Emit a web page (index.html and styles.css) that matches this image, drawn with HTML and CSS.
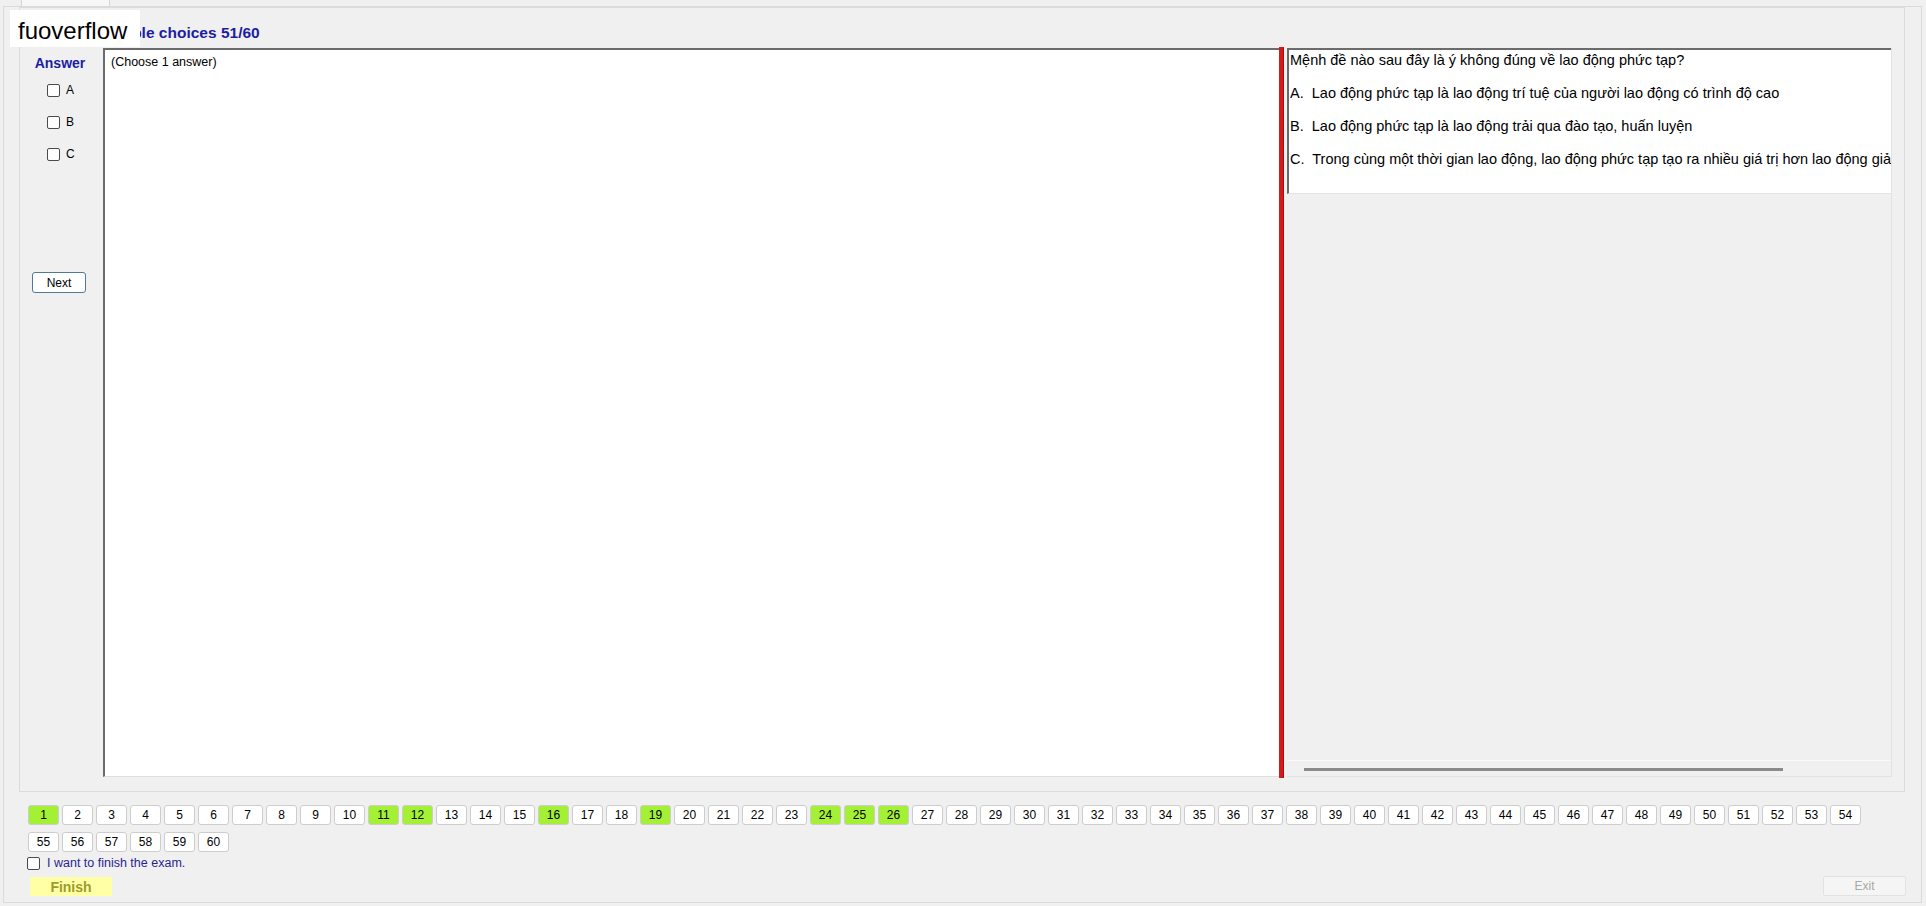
FILE: index.html
```html
<!DOCTYPE html>
<html lang="vi">
<head>
  <meta charset="UTF-8" />
  <title>EOS - Multiple choices</title>
  <link rel="stylesheet" href="styles.css">
</head>
<body>
  <div class="tabs">
    <div class="tab"></div>
  </div>

  <div class="page">
    <div class="exam">
      <div class="exam-title">Multiple choices 51/60</div>

      <div class="exam-body">
        <div class="answer-col">
          <div class="answer-label">Answer</div>
          <div class="answer-row"><span class="box"></span>A</div>
          <div class="answer-row"><span class="box"></span>B</div>
          <div class="answer-row"><span class="box"></span>C</div>
          <button class="btn-next">Next</button>
        </div>

        <div class="choose-box">(Choose 1 answer)</div>

        <div class="splitter"></div>

        <div class="question-col">
          <div class="question-box">
            <p>Mệnh đề nào sau đây là ý không đúng về lao động phức tạp?</p>
            <p>A.  Lao động phức tạp là lao động trí tuệ của người lao động có trình độ cao</p>
            <p>B.  Lao động phức tạp là lao động trải qua đào tạo, huấn luyện</p>
            <p>C.  Trong cùng một thời gian lao động, lao động phức tạp tạo ra nhiều giá trị hơn lao động giản đơn</p>
          </div>
          <div class="question-rest"></div>
          <div class="hscroll"><span class="hscroll-thumb"></span></div>
        </div>
      </div>
    </div>

    <div class="footer">
      <div class="nav-grid" id="navGrid"></div>
      <label class="finish-check"><span class="box"></span>I want to finish the exam.</label>
      <div class="footer-actions">
        <button class="btn-finish">Finish</button>
        <button class="btn-exit" disabled>Exit</button>
      </div>
    </div>
  </div>

  <div class="brand">fuoverflow</div>

<script>
  // questions already answered get the green button
  const answered = [1, 11, 12, 16, 19, 24, 25, 26];
  const navGrid = document.getElementById('navGrid');

  for (let i = 1; i <= 60; i++) {
    const b = document.createElement('button');
    b.className = 'nav-btn' + (answered.includes(i) ? ' done' : '');
    b.textContent = i;
    navGrid.appendChild(b);
  }
</script>
</body>
</html>
```

FILE: styles.css
```css
body {
  margin: 0;
  width: 1926px;
  height: 906px;
  overflow: hidden;
  background: #f0f0f0;
  font-family: 'Liberation Sans', Arial, sans-serif;
  font-size: 12px;
  color: #000;
  position: relative;
}
button {
  font-family: 'Liberation Sans', Arial, sans-serif;
  font-size: 12px;
  padding: 0;
  cursor: pointer;
}
.tabs {
  height: 6px;
  padding-left: 21px;
}
.tab {
  width: 89px;
  height: 6px;
  box-sizing: border-box;
  background: #f7f7f7;
  border-left: 1px solid #d6d6d6;
  border-right: 1px solid #d6d6d6;
}
.page {
  margin-left: 3px;
  width: 1919px;
  height: 897px;
  box-sizing: border-box;
  border: 1px solid #dadada;
}

/* main exam group */
.exam {
  margin-left: 15px;
  width: 1886px;
  height: 785px;
  box-sizing: border-box;
  border: 1px solid #dcdcdc;
  display: flex;
  flex-direction: column;
}
.exam-title {
  height: 40px;
  box-sizing: border-box;
  padding: 16px 0 0 76px;
  font-size: 15.5px;
  line-height: 17px;
  font-weight: bold;
  color: #1d1da3;
}
.exam-body {
  display: flex;
  height: 729px;
  padding-right: 12px;
}
.answer-col {
  width: 83px;
  flex-shrink: 0;
  display: flex;
  flex-direction: column;
  padding-top: 7px;
  box-sizing: border-box;
}
.answer-label {
  font-size: 14px;
  line-height: 16px;
  font-weight: bold;
  color: #1d1da3;
  text-align: center;
  margin-right: 3px;
}
.answer-row {
  height: 32px;
  display: flex;
  align-items: center;
  gap: 6px;
  padding-left: 27px;
  font-size: 12px;
}
.answer-label + .answer-row {
  margin-top: 3px;
}
.box {
  display: inline-block;
  width: 11px;
  height: 11px;
  border: 1px solid #4a4a4a;
  border-radius: 2px;
  background: #fff;
  flex-shrink: 0;
}
.btn-next {
  margin: 102px 0 0 12px;
  width: 54px;
  height: 21px;
  background: #fff;
  border: 1px solid #4f7a95;
  border-radius: 3px;
}
.choose-box {
  width: 1176px;
  flex-shrink: 0;
  box-sizing: border-box;
  background: #fff;
  border-top: 2px solid #6b6b6b;
  border-left: 2px solid #6b6b6b;
  border-bottom: 1px solid #dedede;
  padding: 5px 0 0 6px;
  font-size: 12.5px;
  line-height: 14px;
}
.splitter {
  width: 5px;
  flex-shrink: 0;
  margin: -1px 0;
  background: #d61a1a;
  border-right: 1px solid #a01212;
  box-sizing: border-box;
}
.question-col {
  width: 605px;
  margin-left: 3px;
  flex-shrink: 0;
  display: flex;
  flex-direction: column;
  border-right: 1px solid #e2e2e2;
  border-bottom: 1px solid #e2e2e2;
  box-sizing: border-box;
}
.question-box {
  height: 146px;
  box-sizing: border-box;
  background: #fff;
  border-top: 2px solid #6b6b6b;
  border-left: 2px solid #6b6b6b;
  border-bottom: 1px solid #e4e4e4;
  padding: 2px 0 0 1px;
  overflow: hidden;
  font-size: 14.5px;
}
.question-box p {
  margin: 0 0 16px;
  line-height: 17px;
  white-space: pre;
}
.question-rest {
  flex: 1;
}
.hscroll {
  height: 16px;
  border-top: 1px solid #fafafa;
  padding: 7px 0 0 17px;
  box-sizing: border-box;
}
.hscroll-thumb {
  display: block;
  width: 479px;
  height: 3px;
  background: #8a8a8a;
}

/* bottom strip: question buttons and actions */
.footer {
  padding: 13px 15px 0 24px;
}
.nav-grid {
  width: 1840px;
  display: flex;
  flex-wrap: wrap;
  row-gap: 7px;
}
.nav-btn {
  width: 31px;
  height: 20px;
  margin-right: 3px;
  background: #fff;
  border: 1px solid #cdcdcd;
  border-radius: 3px;
  color: #000;
}
.nav-btn.done {
  background: #a4f034;
}
.finish-check {
  display: flex;
  align-items: center;
  gap: 7px;
  margin: 4px 0 0 -1px;
  height: 14px;
  font-size: 12.5px;
  color: #2b1f93;
}
.footer-actions {
  display: flex;
  justify-content: space-between;
  align-items: center;
  margin-top: 7px;
}
.btn-finish {
  margin-left: 2px;
  width: 82px;
  height: 19px;
  background: #ffffa6;
  border: none;
  font-size: 14px;
  font-weight: bold;
  color: #9c9c2a;
}
.btn-exit {
  width: 83px;
  height: 20px;
  margin-top: -1px;
  background: #f5f5f5;
  border: 1px solid #e2e2e2;
  border-radius: 2px;
  color: #a8a8a8;
  cursor: default;
}

/* watermark label over the title */
.brand {
  position: absolute;
  top: 10px;
  left: 10px;
  width: 130px;
  height: 37px;
  box-sizing: border-box;
  padding: 4px 0 0 8px;
  background: #fff;
  font-size: 24px;
  line-height: 33px;
  color: #000;
}
```
